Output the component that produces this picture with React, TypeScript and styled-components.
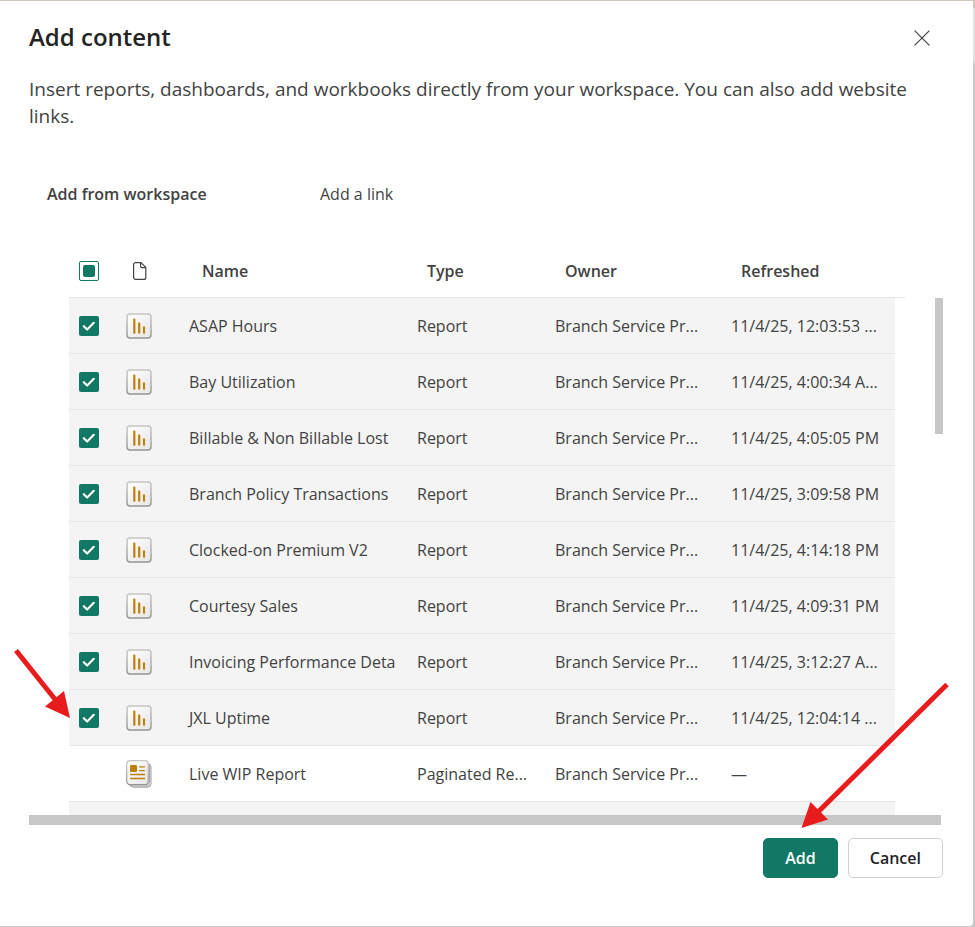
import React, { useEffect, useRef, useState } from "react";
import styled, { createGlobalStyle, css } from "styled-components";

const GlobalStyle = createGlobalStyle`
  * { box-sizing: border-box; }
  body { margin: 0; background: #c8c8c8; }
  body, button, input { font-family: "Open Sans", "Noto Sans", sans-serif; }
`;

const Backdrop = styled.div`
  position: relative;
  height: 100vh;
  min-height: 480px;
  padding: 1px 2px 1px 0;
  background: linear-gradient(#d2c7bc 8px, #e2e2e2 8px, #e2e2e2 60px, #c8c8c8 64px);
`;

const Dialog = styled.section`
  display: flex;
  flex-direction: column;
  height: 100%;
  padding: 20px 30px 48px 29px;
  background: #fff;
  border-radius: 0 0 4px 0;
  color: #424242;
`;

const Header = styled.header`
  display: flex;
  align-items: flex-start;
  justify-content: space-between;
`;

const Title = styled.h1`
  margin: 0;
  font-size: 24px;
  line-height: 32px;
  font-weight: 600;
  color: #242424;
`;

const CloseButton = styled.button`
  display: grid;
  place-items: center;
  width: 42px;
  height: 34px;
  padding: 0;
  border: 0;
  background: none;
  color: #424242;
`;

const Description = styled.p`
  margin: 21px 0 0;
  max-width: 880px;
  font-size: 19px;
  line-height: 27px;
`;

const Tabs = styled.div`
  display: flex;
  margin-top: 44px;
  padding-left: 8px;
`;

const Tab = styled.button<{ $active?: boolean; $width: number }>`
  width: ${(p) => p.$width}px;
  height: 40px;
  padding: 0 10px;
  border: 0;
  background: none;
  text-align: left;
  white-space: nowrap;
  font-size: 16px;
  line-height: 24px;
  font-weight: ${(p) => (p.$active ? 600 : 400)};
  color: #424242;
`;

const ListArea = styled.div`
  display: grid;
  grid-template-columns: minmax(0, 1fr) 8px;
  flex: 1;
  min-height: 0;
  margin-top: 30px;
  padding-left: 40px;
  column-gap: 30px;
  overflow: hidden;
`;

const Table = styled.table`
  width: 100%;
  border-collapse: separate;
  border-spacing: 0;
  table-layout: fixed;
  text-align: left;
  font-size: 16px;
  line-height: 24px;
`;

const Col = styled.col<{ $width?: number }>`
  width: ${(p) => (p.$width ? `${p.$width}px` : "auto")};
`;

const HeadCell = styled.th<{ $inset?: number }>`
  height: 54px;
  padding: 0 0 0 ${(p) => p.$inset ?? 20}px;
  border-bottom: 1px solid #e6e6e6;
  font-weight: 600;
  svg { display: block; }
`;

const GutterCell = styled.td`
  padding: 0;
  border-bottom: 1px solid #e6e6e6;
`;

const Cell = styled.td<{ $selected: boolean; $inset?: number }>`
  height: 56px;
  padding: 0 0 0 ${(p) => p.$inset ?? 10}px;
  border-bottom: 1px solid #e6e6e6;
  background: ${(p) => (p.$selected ? "#f4f4f4" : "#fff")};
  overflow: hidden;
  white-space: nowrap;
  svg { display: block; }
`;

const NextRowCell = styled.td`
  height: 56px;
  background: #f4f4f4;
`;

const CheckWrap = styled.span`
  position: relative;
  display: block;
  width: 20px;
  height: 20px;
  svg {
    position: absolute;
    inset: 0;
    pointer-events: none;
  }
`;

const CheckInput = styled.input<{ $mode: "checked" | "mixed" | "off" }>`
  appearance: none;
  display: block;
  width: 20px;
  height: 20px;
  margin: 0;
  border-radius: 2px;
  ${(p) => p.$mode === "checked" && css`background: #117865;`}
  ${(p) => p.$mode === "mixed" && css`border: 1px solid #117865; background: #fff;`}
`;

const VerticalThumb = styled.div`
  width: 8px;
  height: 136px;
  margin-top: 54px;
  background: #c7c7c7;
`;

const HorizontalThumb = styled.div`
  flex: none;
  height: 10px;
  margin-right: 2px;
  background: #c7c7c7;
`;

const Footer = styled.footer`
  display: flex;
  justify-content: flex-end;
  gap: 10px;
  margin-top: 13px;
`;

const ActionButton = styled.button<{ $primary?: boolean }>`
  height: 40px;
  padding: 0 21px;
  border: 1px solid ${(p) => (p.$primary ? "#117865" : "#d1d1d1")};
  border-radius: 5px;
  background: ${(p) => (p.$primary ? "#117865" : "#fff")};
  color: ${(p) => (p.$primary ? "#fff" : "#242424")};
  font-size: 16px;
  line-height: 24px;
  font-weight: 600;
`;

const Annotations = styled.svg`
  position: absolute;
  inset: 0;
  width: 100%;
  height: 100%;
  pointer-events: none;
`;

type Item = { name: string; type: string; owner: string; refreshed: string; paginated?: boolean };

const OWNER = "Branch Service Pr...";

const items: Item[] = [
  { name: "ASAP Hours", type: "Report", owner: OWNER, refreshed: "11/4/25, 12:03:53 ..." },
  { name: "Bay Utilization", type: "Report", owner: OWNER, refreshed: "11/4/25, 4:00:34 A..." },
  { name: "Billable & Non Billable Lost", type: "Report", owner: OWNER, refreshed: "11/4/25, 4:05:05 PM" },
  { name: "Branch Policy Transactions", type: "Report", owner: OWNER, refreshed: "11/4/25, 3:09:58 PM" },
  { name: "Clocked-on Premium V2", type: "Report", owner: OWNER, refreshed: "11/4/25, 4:14:18 PM" },
  { name: "Courtesy Sales", type: "Report", owner: OWNER, refreshed: "11/4/25, 4:09:31 PM" },
  { name: "Invoicing Performance Deta", type: "Report", owner: OWNER, refreshed: "11/4/25, 3:12:27 A..." },
  { name: "JXL Uptime", type: "Report", owner: OWNER, refreshed: "11/4/25, 12:04:14 ..." },
  { name: "Live WIP Report", type: "Paginated Re...", owner: OWNER, refreshed: "—", paginated: true },
];

const CloseIcon = () => (
  <svg width="16" height="16" viewBox="0 0 16 16" fill="none" stroke="currentColor" strokeWidth="1.2" aria-hidden="true">
    <path d="M.6.6l14.8 14.8M15.4.6L.6 15.4" />
  </svg>
);

const FileIcon = () => (
  <svg width="14" height="18" viewBox="0 0 14 18" fill="none" stroke="#424242" strokeWidth="1.2" strokeLinejoin="round" aria-hidden="true">
    <path d="M2.6.6h5.4l4.8 4.8v10a2 2 0 0 1-2 2H2.6a2 2 0 0 1-2-2V2.6a2 2 0 0 1 2-2z" />
    <path d="M7.6.8v3.4A1.4 1.4 0 0 0 9 5.6h3.6" />
  </svg>
);

const SheetGradient = ({ id }: { id: string }) => (
  <defs>
    <linearGradient id={id} x1="0" y1="0" x2="1" y2="1">
      <stop offset="0" stopColor="#fff" />
      <stop offset="1" stopColor="#e6e6e6" />
    </linearGradient>
    <linearGradient id={`${id}-edge`} x1="0" y1="0" x2="0" y2="1">
      <stop offset="0" stopColor="#c6c6c6" />
      <stop offset="1" stopColor="#949494" />
    </linearGradient>
  </defs>
);

const ReportIcon = ({ id }: { id: string }) => (
  <svg width="28" height="28" viewBox="0 0 28 28" fill="none" aria-hidden="true">
    <SheetGradient id={id} />
    <rect x="2" y="2" width="24" height="24" rx="3" fill={`url(#${id})`} stroke={`url(#${id}-edge)`} strokeWidth="1.4" />
    <path d="M9.3 7.5v13.2M14.2 11.4v9.3M19 15.4v5.3" stroke="#c07f0c" strokeWidth="2.2" strokeLinecap="round" />
  </svg>
);

const PaginatedIcon = ({ id }: { id: string }) => (
  <svg width="28" height="28" viewBox="0 0 28 28" fill="none" aria-hidden="true">
    <SheetGradient id={id} />
    <rect x="5" y="3.5" width="21" height="23.7" rx="3.5" fill="#e4e4e4" stroke="#a2a2a2" />
    <rect x="3.5" y="2.5" width="21" height="23.5" rx="3.5" fill="#efefef" stroke="#a8a8a8" />
    <rect x="1.7" y=".7" width="21.5" height="24" rx="3.5" fill={`url(#${id})`} stroke={`url(#${id}-edge)`} strokeWidth="1.2" />
    <rect x="5" y="5" width="7" height="7" rx="1.2" fill="#c07f0c" />
    <path d="M14.5 6.8h5M14.5 10.6h5M5.6 14.5h14M5.6 18.5h14" stroke="#c07f0c" strokeWidth="1.3" strokeLinecap="round" />
  </svg>
);

type CheckProps = { label: string; checked: boolean; mixed?: boolean; onToggle: () => void };

const Checkbox = ({ label, checked, mixed = false, onToggle }: CheckProps) => {
  const ref = useRef<HTMLInputElement>(null);
  useEffect(() => {
    if (ref.current) ref.current.indeterminate = mixed;
  }, [mixed]);
  return (
    <CheckWrap>
      <CheckInput
        ref={ref}
        type="checkbox"
        aria-label={label}
        checked={checked}
        onChange={onToggle}
        $mode={mixed ? "mixed" : checked ? "checked" : "off"}
      />
      <svg width="20" height="20" viewBox="0 0 20 20" fill="none" aria-hidden="true">
        {mixed && <rect x="4" y="4" width="12" height="12" rx="2" fill="#117865" />}
        {checked && !mixed && (
          <path d="M4.8 10.2l3.4 3.4 6.6-6.8" stroke="#fff" strokeWidth="2.1" strokeLinecap="round" strokeLinejoin="round" />
        )}
      </svg>
    </CheckWrap>
  );
};

type RowProps = { item: Item; index: number; selected: boolean; onToggle: () => void };

const ItemRow = ({ item, index, selected, onToggle }: RowProps) => (
  <tr>
    <Cell $selected={selected}>
      <Checkbox label={`Select ${item.name}`} checked={selected} onToggle={onToggle} />
    </Cell>
    <Cell $selected={selected} $inset={16}>
      {item.paginated ? <PaginatedIcon id={`sheet-${index}`} /> : <ReportIcon id={`sheet-${index}`} />}
    </Cell>
    <Cell $selected={selected}>{item.name}</Cell>
    <Cell $selected={selected}>{item.type}</Cell>
    <Cell $selected={selected}>{item.owner}</Cell>
    <Cell $selected={selected}>{item.refreshed}</Cell>
  </tr>
);

export default function App() {
  const [selected, setSelected] = useState<boolean[]>(items.map((item) => !item.paginated));
  const count = selected.filter(Boolean).length;
  const all = count === items.length;
  const toggle = (index: number) => setSelected((prev) => prev.map((value, i) => (i === index ? !value : value)));

  return (
    <>
      <GlobalStyle />
      <Backdrop>
        <Dialog role="dialog" aria-labelledby="dialog-title">
          <Header>
            <Title id="dialog-title">Add content</Title>
            <CloseButton type="button" aria-label="Close">
              <CloseIcon />
            </CloseButton>
          </Header>
          <Description>
            Insert reports, dashboards, and workbooks directly from your workspace. You can also add website links.
          </Description>
          <Tabs role="tablist">
            <Tab type="button" role="tab" aria-selected $active $width={273}>Add from workspace</Tab>
            <Tab type="button" role="tab" aria-selected={false} $width={100}>Add a link</Tab>
          </Tabs>
          <ListArea>
            <Table>
              <colgroup>
                <Col $width={40} />
                <Col $width={70} />
                <Col />
                <Col $width={138} />
                <Col $width={176} />
                <Col $width={174} />
                <Col $width={10} />
              </colgroup>
              <thead>
                <tr>
                  <HeadCell $inset={10}>
                    <Checkbox
                      label="Select all"
                      checked={all}
                      mixed={count > 0 && !all}
                      onToggle={() => setSelected(items.map(() => !all))}
                    />
                  </HeadCell>
                  <HeadCell $inset={24} aria-label="Item kind"><FileIcon /></HeadCell>
                  <HeadCell $inset={23}>Name</HeadCell>
                  <HeadCell>Type</HeadCell>
                  <HeadCell>Owner</HeadCell>
                  <HeadCell>Refreshed</HeadCell>
                  <GutterCell />
                </tr>
              </thead>
              <tbody>
                {items.map((item, index) => (
                  <ItemRow
                    key={item.name}
                    item={item}
                    index={index}
                    selected={selected[index]}
                    onToggle={() => toggle(index)}
                  />
                ))}
                <tr>
                  <NextRowCell colSpan={6} />
                </tr>
              </tbody>
            </Table>
            <VerticalThumb />
          </ListArea>
          <HorizontalThumb />
          <Footer>
            <ActionButton type="button" $primary>Add</ActionButton>
            <ActionButton type="button">Cancel</ActionButton>
          </Footer>
        </Dialog>
        <Annotations aria-hidden="true">
          <g stroke="#e81c1c" strokeWidth="5">
            <path d="M16 650.5L58 703" />
            <path d="M947 684.5L816 814" />
          </g>
          <g fill="#e81c1c">
            <path d="M70 718L45 706.5L64 691z" />
            <path d="M801.5 828L810.5 802L828 819.5z" />
          </g>
        </Annotations>
      </Backdrop>
    </>
  );
}
